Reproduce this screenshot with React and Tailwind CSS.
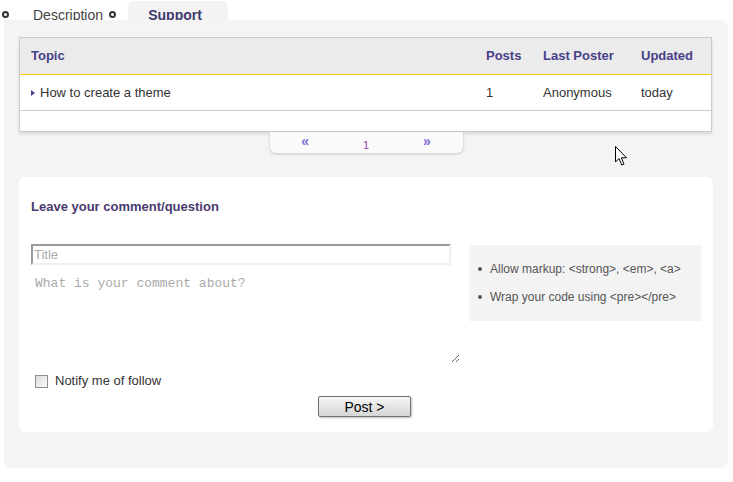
import React from 'react'

function Ring({className}){
  return <span className={"inline-block w-[7px] h-[7px] rounded-full border-2 border-[#333] " + className}/>
}

function Cursor(){
  return (
    <svg className="absolute left-[615px] top-[146px]" width="14" height="21" viewBox="0 0 14 21">
      <path d="M0.5 0.5 L0.5 16 L4 12.5 L6.8 19 L9 18 L6.3 11.8 L11.5 11.8 Z" fill="#fff" stroke="#000" strokeWidth="1" strokeLinejoin="round"/>
    </svg>
  )
}

export default function App(){
  const cols = "grid grid-cols-[455px_56px_99px_1fr]"
  return (
    <div className="relative w-[733px] h-[482px] bg-white overflow-hidden text-[13px] text-[#333]" style={{fontFamily:'"Liberation Sans", Arial, sans-serif'}}>
      <div className="flex items-end h-[20px] overflow-hidden">
        <Ring className="ml-[2px] mb-[2px]"/>
        <span className="ml-[24px] text-[14px] text-[#444] leading-[16px] translate-y-[3px]">Description</span>
        <Ring className="ml-[6px] mb-[2px]"/>
        <div className="ml-[12px] w-[100px] h-[19px] bg-[#f3f3f3] rounded-t-[6px] flex items-end justify-center overflow-hidden">
          <span className="text-[14px] font-bold text-[#3f3a6d] leading-[16px] translate-y-[3px] -translate-x-[3px]">Support</span>
        </div>
      </div>

      <div className="ml-[4px] w-[724px] h-[448px] bg-[#f4f4f4] rounded-b-[7px] rounded-tr-[7px] pt-[17px] px-[15px]">
        <div className="w-[693px] border border-[#cccccc] bg-white shadow-[0_2px_3px_rgba(0,0,0,0.12)]">
          <div className={cols + " h-[37px] items-center bg-[#ebebeb] border-b border-[#ffcc00] font-bold text-[#47408a]"}>
            <div className="px-[11px]">Topic</div>
            <div className="px-[11px]">Posts</div>
            <div className="px-[12px]">Last Poster</div>
            <div className="px-[11px]">Updated</div>
          </div>
          <div className={cols + " h-[36px] items-center border-b border-[#cccccc]"}>
            <div className="px-[11px] flex items-center gap-[5px]">
              <span className="w-0 h-0 border-y-[3.5px] border-y-transparent border-l-[4px] border-l-[#47408a]"/>
              <span>How to create a theme</span>
            </div>
            <div className="px-[11px]">1</div>
            <div className="px-[12px]">Anonymous</div>
            <div className="px-[11px]">today</div>
          </div>
          <div className="h-[20px]"/>
        </div>

        <div className="mx-auto w-[193px] h-[21px] bg-[#fafafa] rounded-b-[6px] shadow-[0_1px_3px_rgba(0,0,0,0.2)] flex items-start justify-center gap-[54px] pt-[1px]">
          <span className="font-bold text-[14px] text-[#7c70d6] leading-[16px]">«</span>
          <span className="text-[11px] text-[#8e44ad] leading-[16px] mt-[4px]">1</span>
          <span className="font-bold text-[14px] text-[#7c70d6] leading-[16px]">»</span>
        </div>

        <div className="mt-[24px] w-[694px] h-[255px] bg-white rounded-[6px] px-[12px] pt-[22px]">
          <h3 className="font-bold text-[13px] leading-[16px] text-[#4b3a6e]">Leave your comment/question</h3>
          <div className="mt-[29px] flex items-start">
            <div className="w-[429px]">
              <input placeholder="Title" className="block w-[420px] h-[21px] px-[1px] text-[13px] border-2 border-t-[#999] border-l-[#999] border-r-[#eee] border-b-[#eee] outline-none placeholder:text-[#aaa]"/>
              <textarea placeholder="What is your comment about?" className="block w-[429px] h-[97px] mt-[1px] px-[4px] pt-[10px] text-[13px] leading-[16px] outline-none resize-y placeholder:text-[#aaa]" style={{fontFamily:'"Liberation Mono", "Courier New", monospace'}}/>
            </div>
            <div className="ml-[9px] mt-[1px] w-[232px] h-[76px] bg-[#f3f3f3] pt-[16px] pl-[9px]">
              <ul className="text-[12px] text-[#555] leading-[16px] flex flex-col gap-[12px]">
                <li className="flex items-center gap-[8px]"><span className="w-[4px] h-[4px] rounded-full bg-[#555]"/>Allow markup: &lt;strong&gt;, &lt;em&gt;, &lt;a&gt;</li>
                <li className="flex items-center gap-[8px]"><span className="w-[4px] h-[4px] rounded-full bg-[#555]"/>Wrap your code using &lt;pre&gt;&lt;/pre&gt;</li>
              </ul>
            </div>
          </div>
          <label className="mt-[10px] ml-[4px] flex items-center gap-[7px] text-[13px] leading-[16px] text-[#333]">
            <span className="w-[13px] h-[13px] border border-[#8f8f8f] bg-gradient-to-br from-[#dcdcdc] to-[#fbfbfb]"/>
            Notify me of follow
          </label>
          <div className="mt-[7px] flex justify-center">
            <button className="w-[93px] h-[21px] ml-[-3px] border border-[#707070] rounded-[2px] bg-gradient-to-b from-[#f6f6f6] to-[#d6d6d6] shadow-[1px_1px_2px_rgba(0,0,0,0.25)] text-[14px] text-black leading-[18px]">Post &gt;</button>
          </div>
        </div>
      </div>
      <Cursor/>
    </div>
  )
}
